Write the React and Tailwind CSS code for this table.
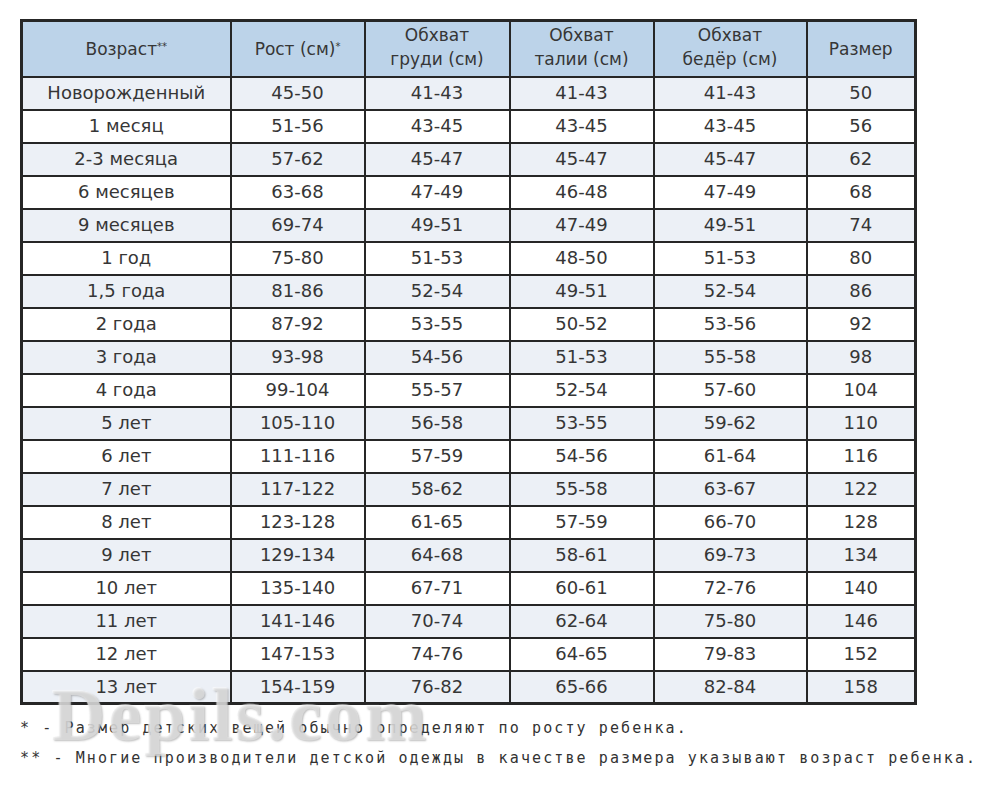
const rows = [
  ["Новорожденный", "45-50", "41-43", "41-43", "41-43", "50"],
  ["1 месяц", "51-56", "43-45", "43-45", "43-45", "56"],
  ["2-3 месяца", "57-62", "45-47", "45-47", "45-47", "62"],
  ["6 месяцев", "63-68", "47-49", "46-48", "47-49", "68"],
  ["9 месяцев", "69-74", "49-51", "47-49", "49-51", "74"],
  ["1 год", "75-80", "51-53", "48-50", "51-53", "80"],
  ["1,5 года", "81-86", "52-54", "49-51", "52-54", "86"],
  ["2 года", "87-92", "53-55", "50-52", "53-56", "92"],
  ["3 года", "93-98", "54-56", "51-53", "55-58", "98"],
  ["4 года", "99-104", "55-57", "52-54", "57-60", "104"],
  ["5 лет", "105-110", "56-58", "53-55", "59-62", "110"],
  ["6 лет", "111-116", "57-59", "54-56", "61-64", "116"],
  ["7 лет", "117-122", "58-62", "55-58", "63-67", "122"],
  ["8 лет", "123-128", "61-65", "57-59", "66-70", "128"],
  ["9 лет", "129-134", "64-68", "58-61", "69-73", "134"],
  ["10 лет", "135-140", "67-71", "60-61", "72-76", "140"],
  ["11 лет", "141-146", "70-74", "62-64", "75-80", "146"],
  ["12 лет", "147-153", "74-76", "64-65", "79-83", "152"],
  ["13 лет", "154-159", "76-82", "65-66", "82-84", "158"],
];

const cols = ["w-[209px]", "w-[134px]", "w-[145px]", "w-[144px]", "w-[153px]", "w-[109px]"];

const App = () => {
  return (
    <div className="w-[1000px] h-[790px] bg-white relative overflow-hidden pt-[19px] pl-[20px]">

      {/* size table */}
      <table className="table-fixed border-collapse border-[3px] border-[#262626] text-[#363636] font-['DejaVu_Sans',sans-serif] text-[18px]">
        <thead>
          <tr className="h-[56px] bg-[#bcd3e9] text-[17px] leading-[24px]">
            <th className={`${cols[0]} font-normal border-2 border-[#262626]`}>Возраст<sup className="text-[10px]">**</sup></th>
            <th className={`${cols[1]} font-normal border-2 border-[#262626]`}>Рост (см)<sup className="text-[10px]">*</sup></th>
            <th className={`${cols[2]} font-normal border-2 border-[#262626] pb-1`}>Обхват<br />груди (см)</th>
            <th className={`${cols[3]} font-normal border-2 border-[#262626] pb-1`}>Обхват<br />талии (см)</th>
            <th className={`${cols[4]} font-normal border-2 border-[#262626] pb-1`}>Обхват<br />бедёр (см)</th>
            <th className={`${cols[5]} font-normal border-2 border-[#262626]`}>Размер</th>
          </tr>
        </thead>
        <tbody>
          {rows.map((r, i) => (
            <tr key={i} className={`h-[33px] ${i % 2 === 0 ? "bg-[#ecf0f6]" : "bg-white"}`}>
              {r.map((c, j) => (
                <td key={j} className="text-center border-2 border-[#262626] p-0 leading-[20px]">{c}</td>
              ))}
            </tr>
          ))}
        </tbody>
      </table>

      {/* notes */}
      <div className="mt-[8px] font-['DejaVu_Sans_Mono',monospace] text-[15px] tracking-[2.1px] text-[#333333] leading-[30px]">
        <p>* - Размер детских вещей обычно определяют по росту ребенка.</p>
        <p>** - Многие производители детской одежды в качестве размера указывают возраст ребенка.</p>
      </div>

      {/* watermark */}
      <div className="absolute left-[52px] top-[678px] font-['Liberation_Serif',serif] font-bold text-[74px] leading-none tracking-[3px] text-[rgba(232,232,232,0.6)] [text-shadow:1px_1px_2px_rgba(110,110,110,0.45),-1px_-1px_1px_rgba(255,255,255,0.6)] pointer-events-none">
        Depils.com
      </div>
    </div>
  );
};

export default App;
